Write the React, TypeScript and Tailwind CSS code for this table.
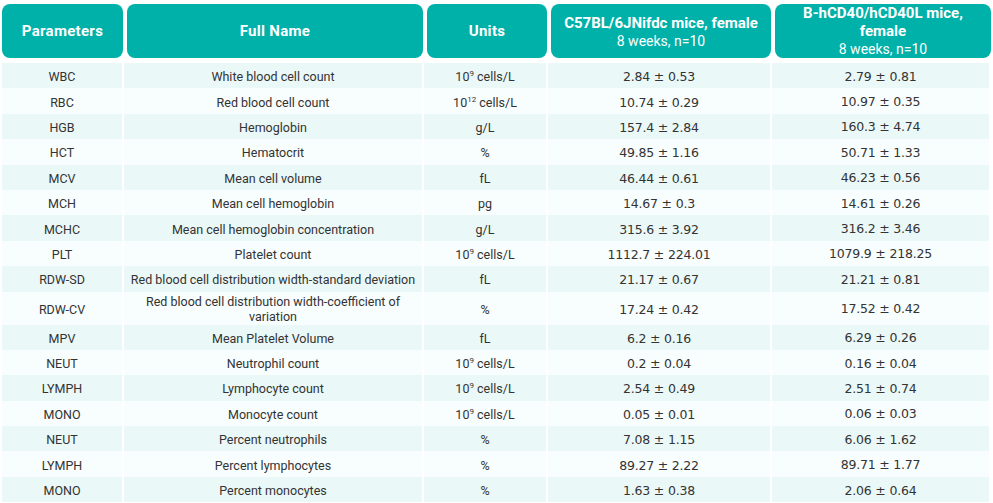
import React from 'react';

type Row = {
  param: string;
  name: string;
  unit: React.ReactNode;
  a: string;
  b: string;
  tall?: boolean;
};

const cells = (exp: string) => (
  <span>
    10<sup className="text-[8px] -top-[5px]">{exp}</sup> cells/L
  </span>
);

const rows: Row[] = [
  { param: 'WBC', name: 'White blood cell count', unit: cells('9'), a: '2.84 ± 0.53', b: '2.79 ± 0.81' },
  { param: 'RBC', name: 'Red blood cell count', unit: cells('12'), a: '10.74 ± 0.29', b: '10.97 ± 0.35' },
  { param: 'HGB', name: 'Hemoglobin', unit: 'g/L', a: '157.4 ± 2.84', b: '160.3 ± 4.74' },
  { param: 'HCT', name: 'Hematocrit', unit: '%', a: '49.85 ± 1.16', b: '50.71 ± 1.33' },
  { param: 'MCV', name: 'Mean cell volume', unit: 'fL', a: '46.44 ± 0.61', b: '46.23 ± 0.56' },
  { param: 'MCH', name: 'Mean cell hemoglobin', unit: 'pg', a: '14.67 ± 0.3', b: '14.61 ± 0.26' },
  { param: 'MCHC', name: 'Mean cell hemoglobin concentration', unit: 'g/L', a: '315.6 ± 3.92', b: '316.2 ± 3.46' },
  { param: 'PLT', name: 'Platelet count', unit: cells('9'), a: '1112.7 ± 224.01', b: '1079.9 ± 218.25' },
  { param: 'RDW-SD', name: 'Red blood cell distribution width-standard deviation', unit: 'fL', a: '21.17 ± 0.67', b: '21.21 ± 0.81' },
  { param: 'RDW-CV', name: 'Red blood cell distribution width-coefficient of variation', unit: '%', a: '17.24 ± 0.42', b: '17.52 ± 0.42', tall: true },
  { param: 'MPV', name: 'Mean Platelet Volume', unit: 'fL', a: '6.2 ± 0.16', b: '6.29 ± 0.26' },
  { param: 'NEUT', name: 'Neutrophil count', unit: cells('9'), a: '0.2 ± 0.04', b: '0.16 ± 0.04' },
  { param: 'LYMPH', name: 'Lymphocyte count', unit: cells('9'), a: '2.54 ± 0.49', b: '2.51 ± 0.74' },
  { param: 'MONO', name: 'Monocyte count', unit: cells('9'), a: '0.05 ± 0.01', b: '0.06 ± 0.03' },
  { param: 'NEUT', name: 'Percent neutrophils', unit: '%', a: '7.08 ± 1.15', b: '6.06 ± 1.62' },
  { param: 'LYMPH', name: 'Percent lymphocytes', unit: '%', a: '89.27 ± 2.22', b: '89.71 ± 1.77' },
  { param: 'MONO', name: 'Percent monocytes', unit: '%', a: '1.63 ± 0.38', b: '2.06 ± 0.64' },
];

const head = 'bg-[#00b1a9] text-white rounded-[8px] flex flex-col items-center justify-center text-center leading-[18px] text-[14px]';
const bold = 'font-bold text-[15px]';
const body = 'flex items-center justify-center text-center text-[12.5px] text-[#333] leading-[15px] px-1';

const App = () => {
  return (
    <div className="w-[993px] h-[503px] bg-white overflow-hidden pt-[4px] pl-[2px]" style={{ fontFamily: 'Roboto, "Liberation Sans", sans-serif' }}>
      {/* Header */}
      <div className="grid grid-cols-[121px_296px_120px_220px_216px] gap-x-[4px] h-[53px]">
        <div className={`${head} ${bold} tracking-[0.3px]`}>Parameters</div>
        <div className={`${head} ${bold} tracking-[0.3px]`}>Full Name</div>
        <div className={`${head} ${bold} tracking-[0.3px]`}>Units</div>
        <div className={`${head} pt-[1px]`}>
          <span className={bold}>C57BL/6JNifdc mice, female</span>
          <span>8 weeks, n=10</span>
        </div>
        <div className={head}>
          <span className={bold}>B-hCD40/hCD40L mice,</span>
          <span className={bold}>female</span>
          <span>8 weeks, n=10</span>
        </div>
      </div>

      {/* Body */}
      <div className="mt-[6px] flex flex-col">
        {rows.map((r, i) => {
          const bg = i % 2 === 0 ? 'bg-[#ebf8f8]' : 'bg-[#f8fdfd]';
          return (
            <div
              key={i}
              className={`grid grid-cols-[120px_298px_122px_222px_217px] gap-x-[2px] ${r.tall ? 'h-[33px]' : 'h-[25.4px]'}`}
            >
              <div className={`${body} ${bg} pt-[2px]`}>{r.param}</div>
              <div className={`${body} ${bg} pt-[2px]`}>{r.name}</div>
              <div className={`${body} ${bg} pt-[2px]`}>{r.unit}</div>
              <div className={`${body} ${bg} pt-[2px] text-[11px] tracking-[-0.2px]`} style={{ fontFamily: '"DejaVu Sans", sans-serif' }}>{r.a}</div>
              <div className={`${body} ${bg} pt-[1px] text-[10px] tracking-[-0.2px]`} style={{ fontFamily: '"DejaVu Sans", sans-serif' }}>{r.b}</div>
            </div>
          );
        })}
      </div>
    </div>
  );
};

export default App;
